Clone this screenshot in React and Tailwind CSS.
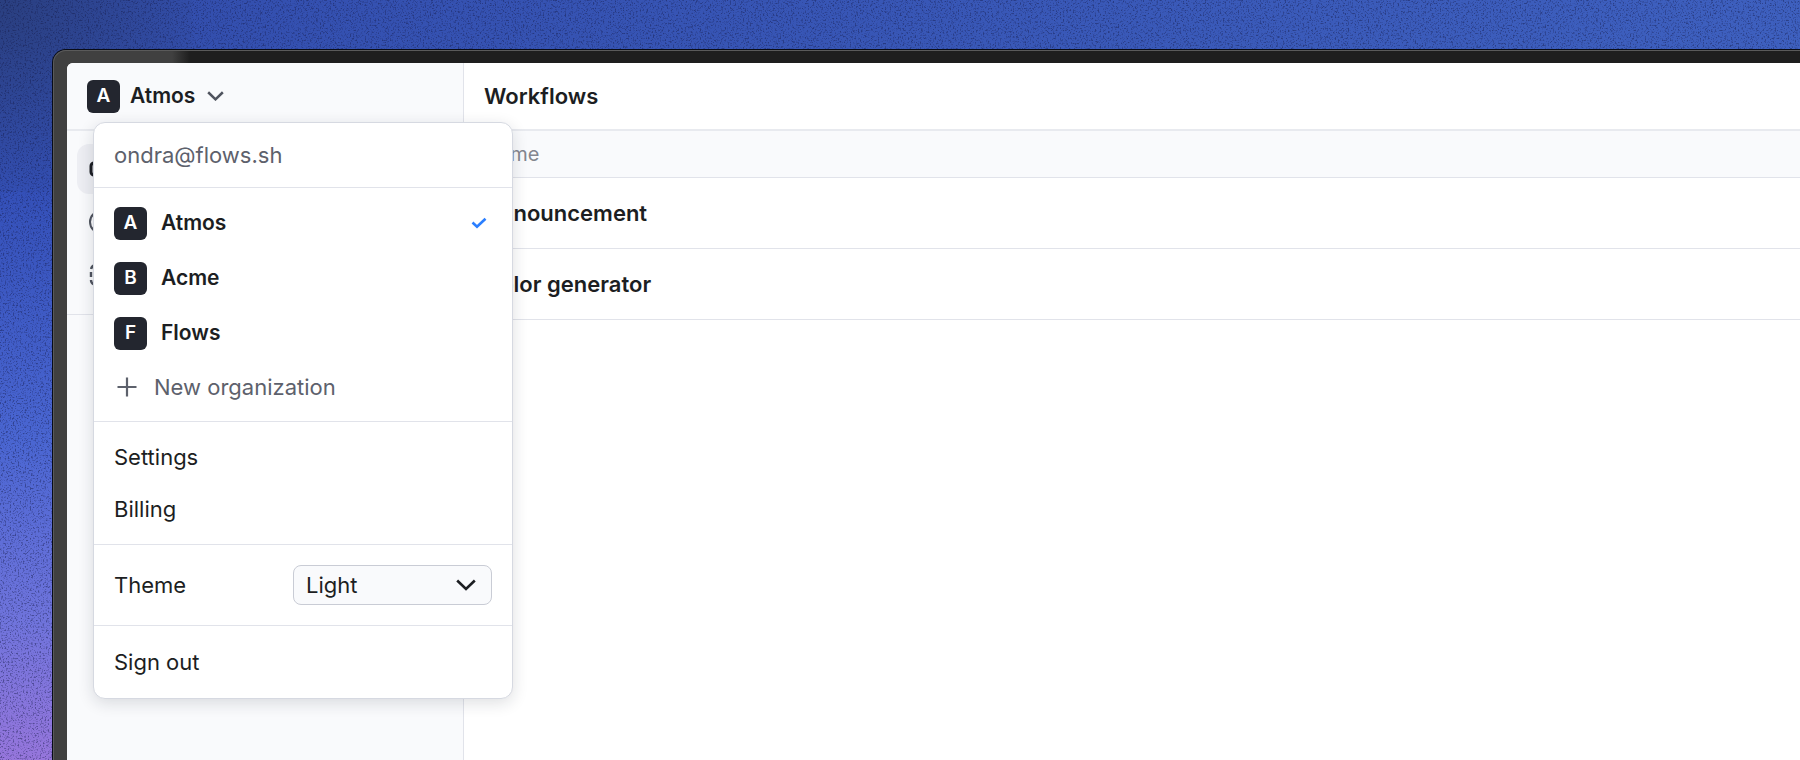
import { useState } from "react";

const organizations = [
  { initial: "A", name: "Atmos" },
  { initial: "B", name: "Acme" },
  { initial: "F", name: "Flows" },
];

const workflows = ["Announcement", "Color generator"];

function Avatar({ initial }) {
  return (
    <span
      aria-hidden="true"
      className="flex size-[33px] shrink-0 items-center justify-center rounded-md bg-[#23262f] text-[19px] font-semibold text-white"
    >
      {initial}
    </span>
  );
}

function Chevron({ className }) {
  return (
    <svg
      viewBox="0 0 20 12"
      fill="none"
      stroke="currentColor"
      className={className}
      aria-hidden="true"
    >
      <path d="M1.2 1.5 10 10 18.8 1.5" />
    </svg>
  );
}

function Grain() {
  return (
    <svg className="absolute inset-0 size-full opacity-45" aria-hidden="true">
      <filter id="grain" x="0" y="0" width="100%" height="100%" colorInterpolationFilters="sRGB">
        <feTurbulence type="fractalNoise" baseFrequency="0.6" numOctaves="3" seed="4" />
        <feColorMatrix values="0 0 0 0 0.08  0 0 0 0 0.1  0 0 0 0 0.28  4 0 0 0 -2.05" />
      </filter>
      <rect width="100%" height="100%" filter="url(#grain)" />
    </svg>
  );
}

function NavLink({ label, active, children }) {
  return (
    <a
      href="#"
      aria-label={label}
      className={
        active
          ? "flex h-[50px] items-center rounded-xl bg-[#edeef3] px-3 text-[#1c1e24]"
          : "flex h-[50px] items-center rounded-xl px-3 text-[#50545f]"
      }
    >
      <svg viewBox="0 0 24 24" fill="none" stroke="currentColor" strokeWidth="2" className="size-6">
        {children}
      </svg>
    </a>
  );
}

function AccountMenu({ current, onSelect }) {
  const [theme, setTheme] = useState("Light");
  return (
    <div className="absolute top-[42px] left-[6px] z-10 w-[420px] divide-y divide-[#e1e3ea] rounded-xl border border-[#d6d9e1] bg-white text-[22px] text-[#1c1e22] shadow-[0_4px_16px_rgba(20,25,40,0.14)]">
      <p className="px-5 py-[18px] text-[#5d616c]">ondra@flows.sh</p>
      <div className="px-5 py-2">
        {organizations.map((org) => (
          <button
            key={org.name}
            type="button"
            onClick={() => onSelect(org.name)}
            className="flex h-[55px] w-full items-center gap-[14px] text-[21px] font-semibold"
          >
            <Avatar initial={org.initial} />
            {org.name}
            {org.name === current && (
              <svg
                viewBox="0 0 16 12"
                fill="none"
                stroke="currentColor"
                strokeWidth="2.6"
                className="mr-[5px] ml-auto h-3 w-4 text-[#2b7fff]"
                aria-label="Selected"
              >
                <path d="M1.5 5.5 6 9.7 14.5 1.7" />
              </svg>
            )}
          </button>
        ))}
        <button type="button" className="flex h-[52px] w-full items-center gap-[17px] pl-[3px] text-[#5d616c]">
          <svg viewBox="0 0 20 20" fill="none" stroke="currentColor" strokeWidth="2.2" className="size-5" aria-hidden="true">
            <path d="M10 .5v19M.5 10h19" />
          </svg>
          New organization
        </button>
      </div>
      <div className="px-5 py-[9px]">
        <button type="button" className="flex h-[52px] w-full items-center">Settings</button>
        <button type="button" className="flex h-[52px] w-full items-center">Billing</button>
      </div>
      <div className="flex items-center justify-between px-5 py-5">
        <label htmlFor="theme">Theme</label>
        <div className="relative">
          <select
            id="theme"
            value={theme}
            onChange={(event) => setTheme(event.target.value)}
            className="h-10 w-[199px] appearance-none rounded-lg border border-[#c9ccd5] bg-[#f9fafc] px-3"
          >
            <option>Light</option>
            <option>Dark</option>
            <option>System</option>
          </select>
          <Chevron className="pointer-events-none absolute top-[14px] right-4 h-3 w-5 stroke-[2.6]" />
        </div>
      </div>
      <div className="px-5 py-[10px]">
        <button type="button" className="flex h-[52px] w-full items-center">Sign out</button>
      </div>
    </div>
  );
}

function Sidebar() {
  const [open, setOpen] = useState(true);
  const [current, setCurrent] = useState("Atmos");
  return (
    <aside className="w-[397px] shrink-0 border-r border-[#e1e3ea] bg-[#f9fafc]">
      <div className="flex h-[68px] items-center border-b-2 border-[#e8eaef] px-5">
        <div className="relative">
          <button
            type="button"
            aria-expanded={open}
            onClick={() => setOpen(!open)}
            className="flex items-center gap-[10px] font-semibold text-[#1c1e22]"
          >
            <Avatar initial="A" />
            {current}
            <Chevron className="ml-[2px] h-[10px] w-[17px] stroke-[3] text-[#50545f]" />
          </button>
          {open && <AccountMenu current={current} onSelect={setCurrent} />}
        </div>
      </div>
      <nav className="flex flex-col gap-[3px] border-b border-[#e1e3ea] px-[10px] pt-[13px] pb-[14px]">
        <NavLink label="Workflows" active>
          <rect x="2" y="6" width="8" height="12" rx="3" strokeWidth="3" />
          <rect x="14" y="6" width="8" height="12" rx="3" strokeWidth="3" />
        </NavLink>
        <NavLink label="Activity">
          <circle cx="12" cy="12" r="11" />
        </NavLink>
        <NavLink label="Blocks">
          <rect x="2" y="2" width="20" height="20" rx="5" strokeDasharray="5 3" strokeWidth="2.4" />
        </NavLink>
      </nav>
    </aside>
  );
}

export default function App() {
  return (
    <div className="relative flex h-screen flex-col overflow-hidden bg-[linear-gradient(to_bottom,#314ba6_0%,#3450b8_25%,#4a66d2_58%,#7074dc_82%,#9676dc_100%)] pt-[49px] pl-13 font-['Inter',sans-serif] text-[21px] leading-[28px]">
      <div className="absolute inset-x-0 top-0 h-[49px] bg-[linear-gradient(to_right,#314ba6_0%,#3450b0_15%,#3e60bf_100%)]" />
      <div className="absolute top-0 left-0 size-48 bg-[radial-gradient(circle_at_0_0,#2a3f80_0%,transparent_80%)]" />
      <Grain />
      <div className="relative flex min-h-0 flex-1 flex-col rounded-tl-[14px] border-t border-l border-[#080c18] bg-[#3f3f3f]">
        <div className="flex min-h-0 flex-1 flex-col rounded-tl-[13px] border-t border-l border-[#5a5a5a] bg-[linear-gradient(to_right,#404040_0px,#404040_118px,#1e1e1e_136px)] pt-3">
          <div className="flex min-h-0 flex-1 bg-[#404040] pl-[13px]">
            <div className="flex min-w-0 flex-1 overflow-hidden rounded-tl-md bg-white">
              <Sidebar />
              <main className="min-w-0 flex-1 text-[22px] text-[#1c1e22]">
                <header className="flex h-[68px] items-center border-b-2 border-[#e8eaef] px-5">
                  <h1 className="font-semibold">Workflows</h1>
                </header>
                <table className="w-full border-collapse text-left">
                  <thead>
                    <tr className="h-[46px] border-b border-[#e1e3ea] bg-[#f9fafc]">
                      <th className="px-5 text-[20px] font-normal text-[#83868f]">Name</th>
                    </tr>
                  </thead>
                  <tbody>
                    {workflows.map((name) => (
                      <tr key={name} className="h-[71px] border-b border-[#e1e3ea]">
                        <td className="px-5 font-semibold">{name}</td>
                      </tr>
                    ))}
                  </tbody>
                </table>
              </main>
            </div>
          </div>
        </div>
      </div>
    </div>
  );
}
